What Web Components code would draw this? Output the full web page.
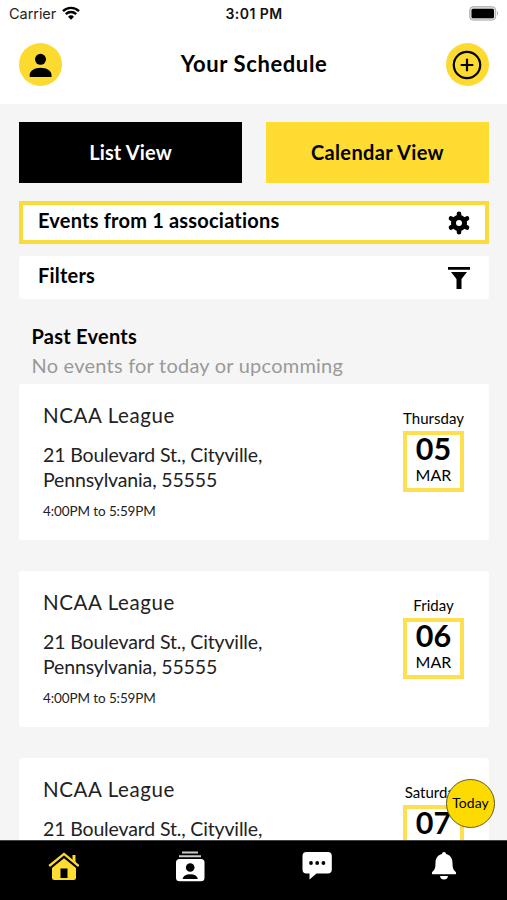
<!DOCTYPE html>
<html lang="en">
<head>
<meta charset="utf-8">
<title>Your Schedule</title>
<style>
  html, body { margin: 0; height: 100%; overflow: hidden; }
  body { font-family: Lato, "Liberation Sans", sans-serif; color: #000; }
</style>
</head>
<body>
<schedule-app></schedule-app>

<script>
class StatusBar extends HTMLElement {
    constructor() {
        super();
        this.attachShadow({ mode: 'open' });
        this.shadowRoot.innerHTML = `
        <style>
          :host {
            display: grid;
            grid-template-columns: 1fr auto 1fr;
            align-items: center;
            height: 28px;
            padding: 0 8px 0 9px;
            font: 14.5px/28px Inter, Roboto, sans-serif;
            color: #222;
            box-sizing: border-box;
          }
          .left { display: flex; align-items: center; gap: 6px; letter-spacing: -.05px; }
          .time { font-weight: 600; color: #111; font-size: 14px; letter-spacing: .45px; }
          .battery { justify-self: end; }
          svg { display: block; position: relative; top: -1px; }
        </style>
        <div class="left">
          <span><slot></slot></span>
          <svg width="18" height="14" viewBox="0 0 18 14" fill="none" stroke="#000" stroke-width="2.4">
            <path d="M1 5.2a11.4 11.4 0 0 1 16 0M3.8 8.1a7.4 7.4 0 0 1 10.400 0"/>
            <path d="M9 13.700L6 10.700a4.300 4.300 0 0 1 6 0z" fill="#000" stroke="none"/>
          </svg>
        </div>
        <span class="time"><slot name="time"></slot></span>
        <svg class="battery" width="30" height="15" viewBox="0 0 30 15">
          <rect x=".7" y=".7" width="26" height="13.400" rx="3.500" fill="#ddd" stroke="#aaa"/>
          <rect x="2.500" y="2.700" width="22.500" height="9.500" rx="1.500"/>
          <path d="M28 5q2 2.400 0 4.800z" fill="#aaa"/>
        </svg>`;
    }
}

class RoundButton extends HTMLElement {
    constructor() {
        super();
        this.attachShadow({ mode: 'open' });
        this.shadowRoot.innerHTML = `
        <style>
          :host {
            display: flex;
            align-items: center;
            justify-content: center;
            width: 43px;
            height: 43px;
            border-radius: 50%;
            background: #fdda30;
          }
        </style>
        <slot></slot>`;
    }
}

class ViewButton extends HTMLElement {
    constructor() {
        super();
        this.attachShadow({ mode: 'open' });
        this.shadowRoot.innerHTML = `
        <style>
          :host {
            display: block;
            flex: 1;
            height: 61px;
            background: #fedc32;
            font-size: 20px;
            font-weight: 700;
            line-height: 60px;
            text-align: center;
            letter-spacing: .35px;
          }
          :host([active]) { background: #000; color: #fff; letter-spacing: .15px; }
        </style>
        <slot></slot>`;
    }
}

class OptionRow extends HTMLElement {
    constructor() {
        super();
        this.attachShadow({ mode: 'open' });
        this.shadowRoot.innerHTML = `
        <style>
          :host {
            display: flex;
            justify-content: space-between;
            align-items: center;
            height: 43px;
            padding: 0 18px 0 19px;
            background: #fff;
            border-radius: 3px;
            box-sizing: border-box;
            font-size: 20px;
            font-weight: 700;
            letter-spacing: .2px;
          }
          :host([outlined]) {
            padding: 0 14px 0 15px;
            border: 4px solid #fadb3c;
            border-radius: 0;
          }
          span { padding-bottom: 5px; }
        </style>
        <span><slot></slot></span>
        <slot name="icon"></slot>`;
    }
}

class EventCard extends HTMLElement {
    constructor() {
        super();
        this.attachShadow({ mode: 'open' });
    }

    connectedCallback() {
        this.render();
    }

    render() {
        this.shadowRoot.innerHTML = `
        <style>
          :host {
            display: flex;
            justify-content: space-between;
            flex: none;
            height: 156px;
            padding: 18px 25px 0 24px;
            background: #fff;
            border-radius: 3px;
            box-sizing: border-box;
            color: #222;
          }
          .name { font-size: 20.5px; line-height: 26px; letter-spacing: .6px; }
          .place { width: 235px; margin-top: 14px; font-size: 19.5px; line-height: 25px; letter-spacing: -.15px; }
          .time { margin-top: 9px; font-size: 13.5px; line-height: 20px; letter-spacing: -.1px; }
          .when { width: 61px; color: #000; display: flex; flex-direction: column; align-items: center; }
          .day { font-size: 15px; line-height: 20px; margin-top: 6px; white-space: nowrap; }
          .date {
            width: 61px;
            height: 61px;
            margin-top: 3px;
            border: 4px solid #fddf50;
            box-sizing: border-box;
            text-align: center;
          }
          .num { font-size: 30.5px; font-weight: 700; line-height: 26px; }
          .month { font-size: 16px; line-height: 20px; margin-top: 4px; letter-spacing: .1px; }
        </style>
        <div>
          <div class="name"><slot></slot></div>
          <div class="place"><slot name="place"></slot></div>
          <div class="time">${this.getAttribute('time')}</div>
        </div>
        <div class="when">
          <div class="day">${this.getAttribute('day')}</div>
          <div class="date">
            <div class="num">${this.getAttribute('date')}</div>
            <div class="month">${this.getAttribute('month')}</div>
          </div>
        </div>`;
    }
}

class TabBar extends HTMLElement {
    constructor() {
        super();
        this.attachShadow({ mode: 'open' });
        this.shadowRoot.innerHTML = `
        <style>
          :host {
            display: grid;
            grid-template-columns: repeat(4, 1fr);
            justify-items: center;
            align-items: start;
            flex: none;
            height: 60px;
            padding-top: 9px;
            background: #000;
            border-top: 1px solid #444;
            box-sizing: border-box;
          }
        </style>
        <svg width="32" height="32" viewBox="-1 0 32 32">
          <path d="M4 16L16 5.500 28 16v11.500q0 2.500-2.500 2.500h-19Q4 30 4 27.500z" fill="#fedc32"/>
          <path d="M24.500 5h3v9h-3z" fill="#fedc32"/>
          <path d="M.5 18.300L16 5.600l15.500 12.700" fill="none" stroke="#000" stroke-width="4"/>
          <path d="M1.200 16L16 3.900 30.800 16" fill="none" stroke="#fedc32" stroke-width="2.300"/>
          <path d="M12.500 18.500h7V28h-7z"/>
        </svg>
        <svg width="30" height="32" viewBox="0 0 30 32">
          <path d="M7 2.500h16M4 6.200h22" stroke="#ccc" stroke-width="2"/>
          <rect x="1" y="9" width="28.500" height="22.300" rx="3.500" fill="#fff"/>
          <circle cx="15.200" cy="17.500" r="4.300"/>
          <path d="M7.500 29q1-4.800 7.700-4.800t7.700 4.800z"/>
        </svg>
        <svg width="30" height="32" viewBox="0 0 30 32">
          <path d="M4.500 2h21.300q4 0 4 4v13.500q0 4-4 4H14.500L7.500 29.500v-6h-3q-4 0-4-4V6q0-4 4-4z" fill="#fff"/>
          <circle cx="9" cy="13" r="1.900"/><circle cx="15.200" cy="13" r="1.900"/><circle cx="21.400" cy="13" r="1.900"/>
        </svg>
        <svg width="26" height="32" viewBox="0 0 26 32">
          <path d="M13 2c1.200 0 2 .8 2 2 4.500 1 6.500 4.500 6.500 9 0 5.500 1 7 3.300 9q1 2.300-1 2.300H2.200q-2 0-1-2.300c2.300-2 3.300-3.500 3.300-9 0-4.500 2-8 6.500-9 0-1.200.8-2 2-2z" fill="#fff"/>
          <path d="M9 26h8q-.5 3.600-4 3.600T9 26z" fill="#fff"/>
        </svg>`;
    }
}

class ScheduleApp extends HTMLElement {
    constructor() {
        super();
        this.attachShadow({ mode: 'open' });
        this.shadowRoot.innerHTML = `
        <style>
          :host {
            display: flex;
            flex-direction: column;
            position: relative;
            height: 900px;
            background: #f5f5f5;
            overflow: hidden;
          }
          header { flex: none; height: 104px; background: #fff; }
          .title-row {
            display: flex;
            justify-content: space-between;
            align-items: center;
            height: 43px;
            padding: 15px 18px 0 19px;
          }
          h1 { margin: -2px 0 0; font-size: 22px; line-height: 40px; font-weight: 700; letter-spacing: .6px; }
          main { flex: 1; min-height: 0; overflow: hidden; padding: 18px 18px 0 19px; display: flex; flex-direction: column; }
          .views { display: flex; flex: none; gap: 24px; }
          option-row { flex: none; margin-top: 12px; }
          .views + option-row { margin-top: 18px; }
          h2 { margin: 24px 0 0 12.5px; font-size: 20px; line-height: 26px; letter-spacing: .25px; }
          .empty { margin: 3px 0 5px 12.5px; font-size: 20px; line-height: 27px; color: #999; letter-spacing: .23px; }
          .events { display: flex; flex-direction: column; gap: 31px; }
          /* floats over the list, just above the tab bar */
          .today {
            position: absolute;
            right: 12px;
            bottom: 72px;
            width: 49px;
            height: 49px;
            box-sizing: border-box;
            border: 1px solid #665c18;
            border-radius: 50%;
            background: #fedb00;
            font-size: 14px;
            line-height: 46px;
            text-align: center;
          }
        </style>
        <header>
          <status-bar>Carrier<span slot="time">3:01 PM</span></status-bar>
          <div class="title-row">
            <round-button>
              <svg width="24" height="26" viewBox="0 0 24 26">
                <circle cx="11.500" cy="7.300" r="5.500"/>
                <path d="M.7 25v-2.200C.7 18.500 6 15.700 11.600 15.700s10.900 2.800 10.900 7.100V25z"/>
              </svg>
            </round-button>
            <h1>Your Schedule</h1>
            <round-button>
              <svg width="30" height="30" viewBox="0 0 30 30" fill="none" stroke="#000" stroke-width="2.200">
                <circle cx="15" cy="15" r="13.200"/>
                <path d="M15 8.700v12.600M8.700 15h12.600"/>
              </svg>
            </round-button>
          </div>
        </header>
        <main>
          <div class="views">
            <view-button active>List View</view-button>
            <view-button>Calendar View</view-button>
          </div>
          <option-row outlined>Events from 1 associations
            <svg slot="icon" width="24" height="24" viewBox="0 0 24 24">
              <path d="M12 2.700v18.600M4 7.400l16 9.200M20 7.400L4 16.600" stroke="#000" stroke-width="4.600" stroke-linecap="round"/>
              <circle cx="12" cy="12" r="8"/>
              <circle cx="12" cy="12" r="3" fill="#fff"/>
            </svg>
          </option-row>
          <option-row>Filters
            <svg slot="icon" width="24" height="24" viewBox="0 0 24 24">
              <path d="M1 1h22v2.700H1zM4 6h16l-5.500 7v10h-5V13z"/>
            </svg>
          </option-row>
          <h2>Past Events</h2>
          <div class="empty">No events for today or upcomming</div>
          <div class="events">
            <event-card day="Thursday" date="05" month="MAR" time="4:00PM to 5:59PM">NCAA League<span slot="place">21 Boulevard St., Cityville, Pennsylvania, 55555</span></event-card>
            <event-card day="Friday" date="06" month="MAR" time="4:00PM to 5:59PM">NCAA League<span slot="place">21 Boulevard St., Cityville, Pennsylvania, 55555</span></event-card>
            <event-card day="Saturday" date="07" month="MAR" time="4:00PM to 5:59PM">NCAA League<span slot="place">21 Boulevard St., Cityville, Pennsylvania, 55555</span></event-card>
          </div>
        </main>
        <div class="today">Today</div>
        <tab-bar></tab-bar>`;
    }
}

customElements.define('status-bar', StatusBar);
customElements.define('round-button', RoundButton);
customElements.define('view-button', ViewButton);
customElements.define('option-row', OptionRow);
customElements.define('event-card', EventCard);
customElements.define('tab-bar', TabBar);
customElements.define('schedule-app', ScheduleApp);
</script>
</body>
</html>
